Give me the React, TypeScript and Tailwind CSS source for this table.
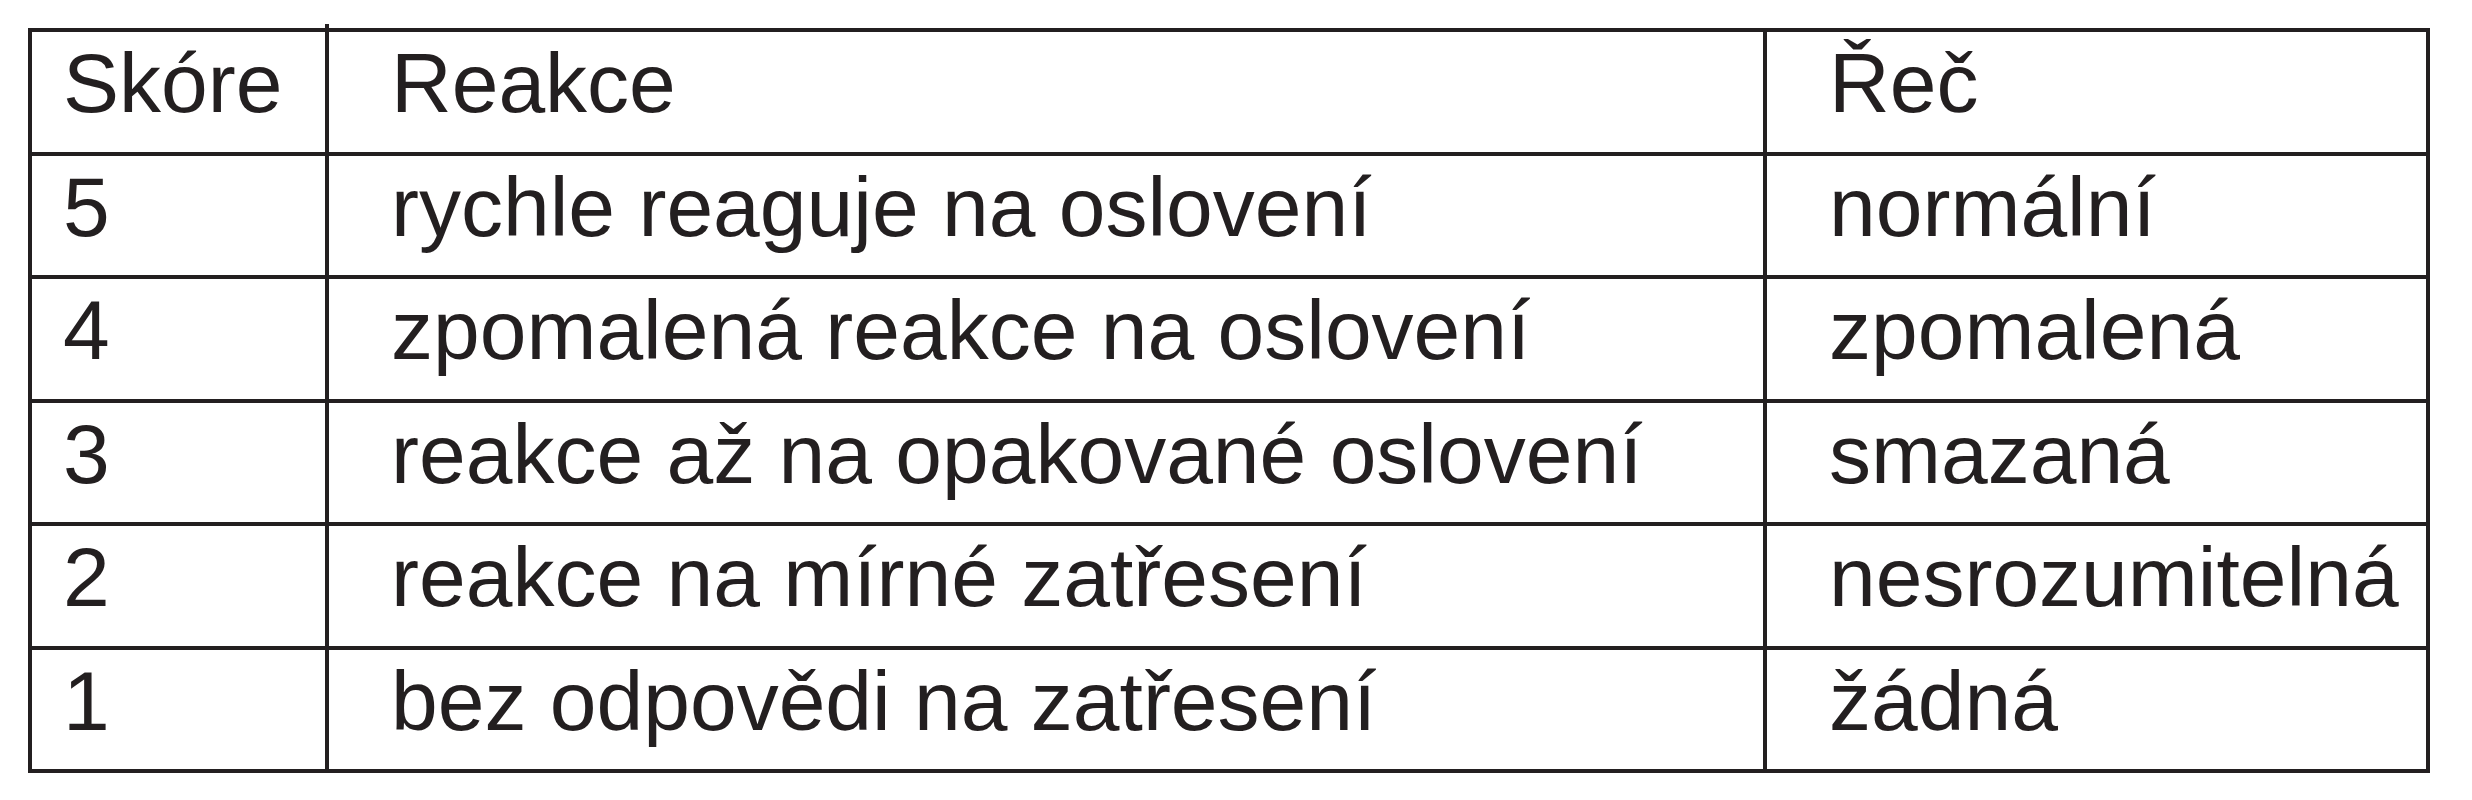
const rows: [string, string, string][] = [
  ['Skóre', 'Reakce', 'Řeč'],
  ['5', 'rychle reaguje na oslovení', 'normální'],
  ['4', 'zpomalená reakce na oslovení', 'zpomalená'],
  ['3', 'reakce až na opakované oslovení', 'smazaná'],
  ['2', 'reakce na mírné zatřesení', 'nesrozumitelná'],
  ['1', 'bez odpovědi na zatřesení', 'žádná'],
]

export default function App() {
  return (
    <div className="h-[800px] w-[2472px] bg-white pl-[28px] pt-[28px] font-['Liberation_Sans',Arial,sans-serif] text-[84px] leading-[84px] text-[#231f20]">
      <div className="relative w-[2402px] border-4 border-[#231f20]">
        <span className="absolute left-[293px] top-[-8px] h-[8px] w-[4px] bg-[#231f20]" />
        {rows.map(([score, reaction, speech], i) => (
          <div
            key={score}
            className={
              i < rows.length - 1
                ? 'grid h-[123.5px] grid-cols-[297px_1438px_1fr] border-b-4 border-[#231f20]'
                : 'grid h-[119.5px] grid-cols-[297px_1438px_1fr]'
            }
          >
            <div className="border-r-4 border-[#231f20] pl-[31px] pt-[9px]">{score}</div>
            <div className="border-r-4 border-[#231f20] pl-[62px] pt-[9px] whitespace-nowrap">{reaction}</div>
            <div className="pl-[62px] pt-[9px] whitespace-nowrap">{speech}</div>
          </div>
        ))}
      </div>
    </div>
  )
}
